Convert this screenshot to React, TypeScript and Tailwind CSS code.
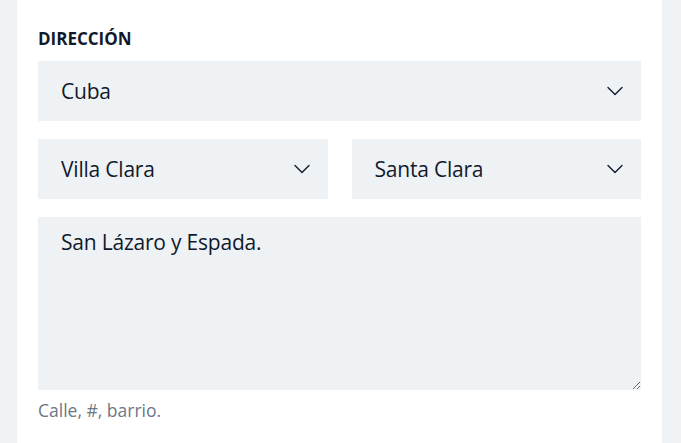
import { ChevronDown } from "lucide-react";

function SelectBox({ value }: { value: string }) {
    return (
        <div className="flex h-[60px] items-center justify-between bg-[#eef2f5] pl-[23px] pr-[12px]">
            <span className="mt-[2px] text-[21px] tracking-[-0.01em] text-[#111a2c]">{value}</span>
            <ChevronDown size={28} strokeWidth={1.2} className="text-[#111a2c]" />
        </div>
    );
}

export default function App() {
    return (
        <div
            className="flex h-[443px] bg-[#eff3f6] pl-[17px] pr-[19px]"
            style={{ fontFamily: '"Open Sans", "Noto Sans", sans-serif' }}
        >
            <div className="flex-1 bg-white px-[21px] pt-[26px]">
                <h2 className="text-[17px] font-bold uppercase text-[#111a2c]">
                    Dirección
                </h2>

                <div className="mt-[9px] flex flex-col gap-[18px]">
                    <SelectBox value="Cuba" />

                    <div className="grid grid-cols-2 gap-[24px]">
                        <SelectBox value="Villa Clara" />
                        <SelectBox value="Santa Clara" />
                    </div>

                    <textarea
                        defaultValue="San Lázaro y Espada."
                        className="h-[173px] w-full bg-[#eef2f5] px-[23px] py-[10px] text-[21px] tracking-[-0.01em] text-[#111a2c] outline-none"
                    />
                </div>

                <p className="mt-[7px] text-[17.5px] text-[#6b7785]">Calle, #, barrio.</p>
            </div>
        </div>
    );
}
